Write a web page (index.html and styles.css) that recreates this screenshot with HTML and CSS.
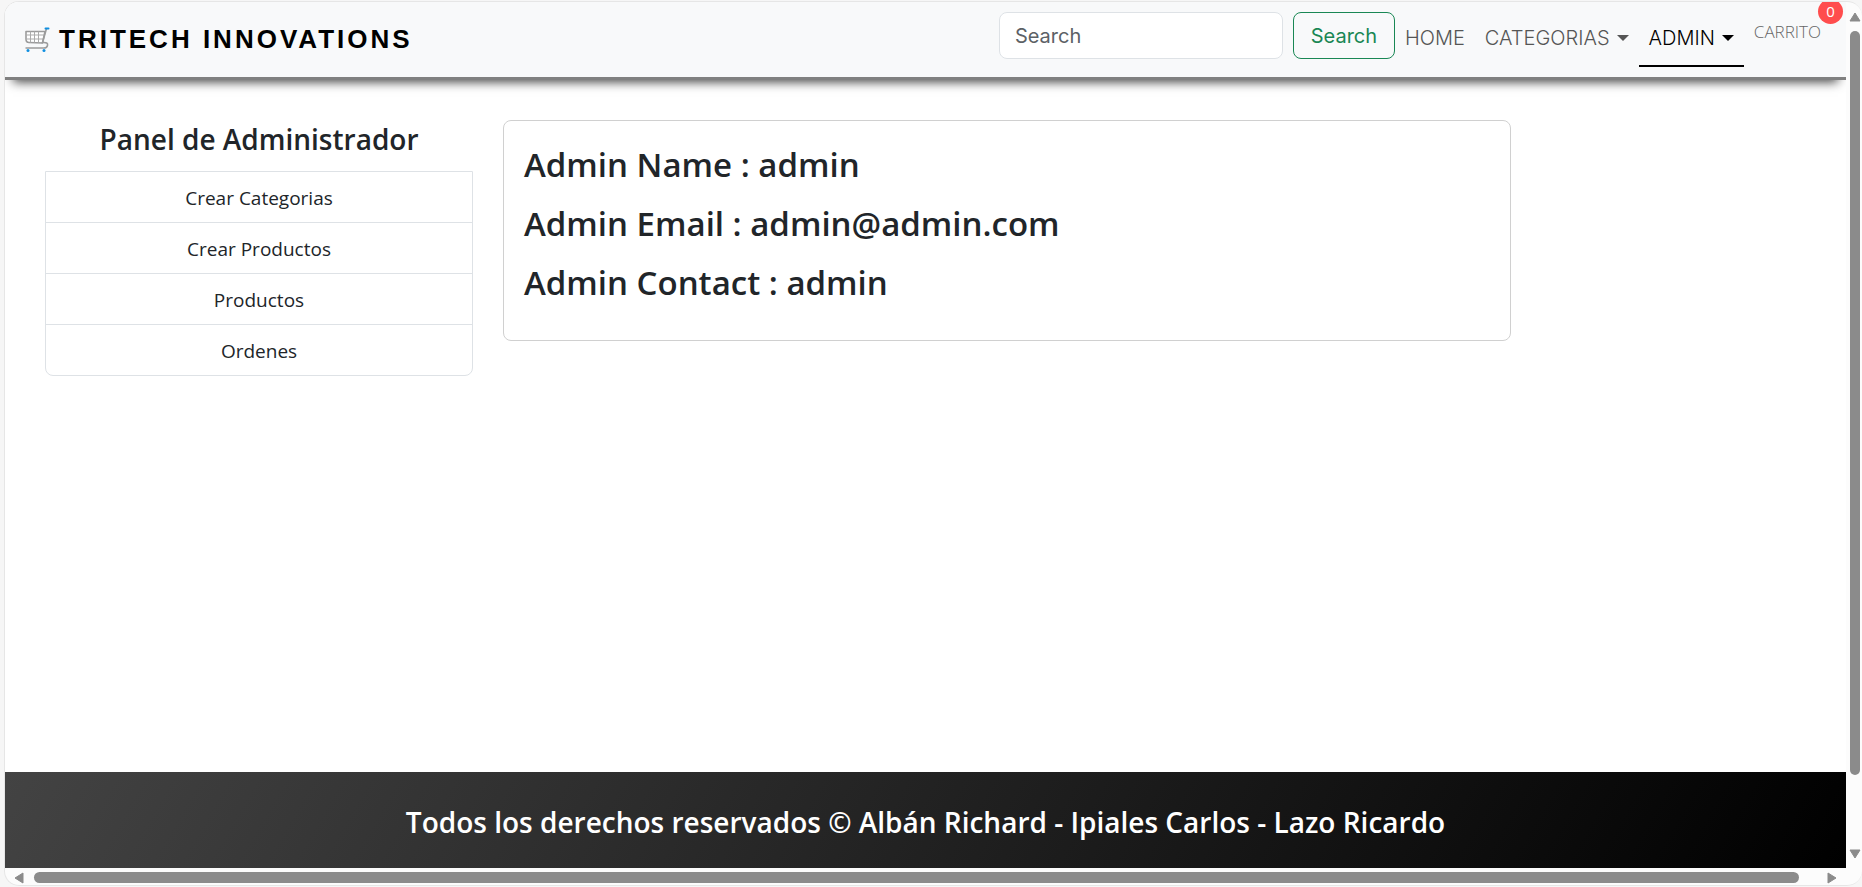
FILE: index.html
```html
<!DOCTYPE html>
<html lang="es">
<head>
<meta charset="utf-8">
<title>Tritech Innovations</title>
<link rel="stylesheet" href="styles.css">
</head>
<body>
<div class="window">
  <div class="page">
    <header class="navbar">
      <a class="brand" href="#">
        <svg class="cart" viewBox="0 0 26 26" aria-hidden="true">
          <path d="M2 5.500H21L18.500 17L5 16.500Q2 16.500 2 13Z" fill="#fff" stroke="#9b9b9b" stroke-width="1.600" stroke-linejoin="round"/>
          <path d="M6.500 5.500V16.500M10.500 5.500V16.500M14.500 5.500V16.500M2 9H20M2 13H19" fill="none" stroke="#ababab" stroke-width="1"/>
          <path d="M22.500 2.500L18.500 16.500Q24.500 16 23.500 19.500Q23 22 20 22H1.500" fill="none" stroke="#9b9b9b" stroke-width="1.600"/>
          <path d="M21.500 2.500H24.500" stroke="#0f8fe0" stroke-width="2" stroke-linecap="round"/>
          <circle cx="4" cy="24.500" r="1.500" fill="#0f8fe0"/><circle cx="20" cy="24.500" r="1.500" fill="#0f8fe0"/>
        </svg>
        <span>TRITECH INNOVATIONS</span>
      </a>
      <form class="search">
        <input class="search-box" type="search" placeholder="Search" aria-label="Search">
        <button class="search-button" type="button">Search</button>
      </form>
      <nav class="links">
        <a class="link" href="#">HOME</a>
        <a class="link caret" href="#">CATEGORIAS</a>
        <a class="link caret active" href="#">ADMIN</a>
        <a class="cart-link" href="#">CARRITO<span class="badge">0</span></a>
      </nav>
    </header>
    <main class="content">
      <aside class="side">
        <h4 class="side-title">Panel de Administrador</h4>
        <nav class="menu">
          <a class="menu-item" href="#">Crear Categorias</a>
          <a class="menu-item" href="#">Crear Productos</a>
          <a class="menu-item" href="#">Productos</a>
          <a class="menu-item" href="#">Ordenes</a>
        </nav>
      </aside>
      <section class="detail">
        <div class="card">
          <h3 class="info">Admin Name : admin</h3>
          <h3 class="info">Admin Email : admin@admin.com</h3>
          <h3 class="info">Admin Contact : admin</h3>
        </div>
      </section>
    </main>
    <footer class="footer">Todos los derechos reservados © Albán Richard - Ipiales Carlos - Lazo Ricardo</footer>
  </div>
  <div class="bar-y" aria-hidden="true">
    <svg class="arrow" viewBox="0 0 12 10"><path d="M6 1L11 9H1Z"/></svg>
    <div class="track-y"><div class="thumb-y"></div></div>
    <svg class="arrow" viewBox="0 0 12 10"><path d="M6 9L11 1H1Z"/></svg>
  </div>
  <div class="bar-x" aria-hidden="true">
    <svg class="arrow-side" viewBox="0 0 10 12"><path d="M1 6L9 1V11Z"/></svg>
    <div class="track-x"><div class="thumb-x"></div></div>
    <svg class="arrow-side" viewBox="0 0 10 12"><path d="M9 6L1 1V11Z"/></svg>
  </div>
</div>
</body>
</html>
```
FILE: styles.css
```css
* { box-sizing: border-box; }
body {
  margin: 0;
  height: 100vh;
  padding: 1px 0 1px 4px;
  background: #f6f6f6;
  color: #212529;
  font-family: "Open Sans", "Noto Sans", sans-serif;
  overflow: hidden;
}
a { color: inherit; text-decoration: none; }
.window {
  height: 100%;
  display: grid;
  grid-template-columns: 1fr 16px;
  grid-template-rows: 1fr 17px;
  border: 1px solid #e6e6e6;
  border-right: 0;
  border-radius: 15px;
  background: #fcfcfc;
  overflow: hidden;
}
.page {
  display: flex;
  flex-direction: column;
  min-width: 0;
  overflow: hidden;
  background: #fff;
}

/* Top navigation */
.navbar {
  display: flex;
  align-items: flex-start;
  padding: 10px 25px 0 19px;
  height: 78px;
  flex: none;
  background: #f8f9fa;
  border-bottom: 3px solid #808080;
  box-shadow: 0 10px 10px -8px #444;
  font-family: Inter, "Open Sans", sans-serif;
}
.brand {
  display: flex;
  align-items: center;
  gap: 9px;
  height: 54px;
  margin-right: auto;
  color: #000;
  font: bold 26px "Liberation Sans", Arial, sans-serif;
  letter-spacing: 3px;
}
.cart { width: 26px; height: 26px; }
.search { display: flex; gap: 10px; }
.search-box, .search-button {
  height: 47px;
  border-radius: 8px;
  padding: 0 15px;
  font: 400 20px Inter, "Open Sans", sans-serif;
}
.search-box { width: 284px; border: 1px solid #dee2e6; background: #fff; }
.search-box::placeholder { color: #5c6166; opacity: 1; }
.search-button { width: 102px; border: 1px solid #198754; background: transparent; color: #198754; }
.links { display: flex; align-items: flex-start; }
.link {
  display: flex;
  align-items: center;
  height: 55px;
  padding: 0 10px 2px;
  border-bottom: 2px solid transparent;
  color: #555;
  font-size: 20px;
  font-weight: 300;
}
.caret::after {
  content: "";
  margin-left: 7px;
  border: 6px solid transparent;
  border-top-color: currentColor;
  border-bottom: 0;
}
.active { color: #000; border-bottom-color: #000; }
.cart-link {
  position: relative;
  padding-left: 10px;
  line-height: 40px;
  color: #666;
  font-family: "Open Sans", sans-serif;
  font-size: 17px;
  font-weight: 300;
}
.badge {
  position: absolute;
  top: -13px;
  right: -22px;
  width: 25px;
  height: 25px;
  border-radius: 50%;
  background: #ff4d4d;
  color: #fff;
  font-size: 15px;
  font-weight: 400;
  line-height: 25px;
  text-align: center;
}

/* Admin panel */
.content {
  flex: 1;
  display: grid;
  grid-template-columns: 1fr 3fr;
  align-items: start;
  margin: 40px -16px 0 25px;
}
.side { padding: 0 15px; text-align: center; }
.side-title { margin: 0 0 13px; font-size: 28px; font-weight: 600; line-height: 38px; }
.menu { border: 1px solid #dee2e6; border-radius: 0 0 8px 8px; }
.menu-item { display: block; box-sizing: content-box; height: 50px; line-height: 52px; font-size: 19px; }
.menu-item + .menu-item { border-top: 1px solid #dee2e6; }
.detail { padding: 0 15px; }
.card {
  width: 75%;
  padding: 14px 20px 28px;
  border: 1px solid #d0d0d0;
  border-radius: 8px;
}
.info { margin: 0; font-size: 33px; font-weight: 600; line-height: 59px; }

.footer {
  flex: none;
  height: 96px;
  line-height: 100px;
  background: linear-gradient(120deg, #434343, #000);
  color: #fff;
  font-size: 28px;
  font-weight: 600;
  text-align: center;
}

/* Scroll bars */
.bar-y {
  grid-row: 1 / 3;
  grid-column: 2;
  display: flex;
  flex-direction: column;
  align-items: center;
  padding: 10px 0 26px 2px;
}
.track-y { flex: 1; width: 10px; padding-top: 9px; }
.thumb-y { height: 91%; border-radius: 5px; background: #8b8b8b; }
.bar-x {
  grid-row: 2;
  grid-column: 1;
  display: flex;
  align-items: center;
  padding: 2px 9px 0;
}
.track-x { flex: 1; padding: 0 28px 0 10px; }
.thumb-x { height: 11px; border-radius: 6px; background: #8b8b8b; }
.arrow { width: 12px; height: 10px; }
.arrow-side { width: 10px; height: 12px; }
.arrow path, .arrow-side path { fill: #8b8b8b; stroke: #8b8b8b; stroke-width: 1; stroke-linejoin: round; }
```
